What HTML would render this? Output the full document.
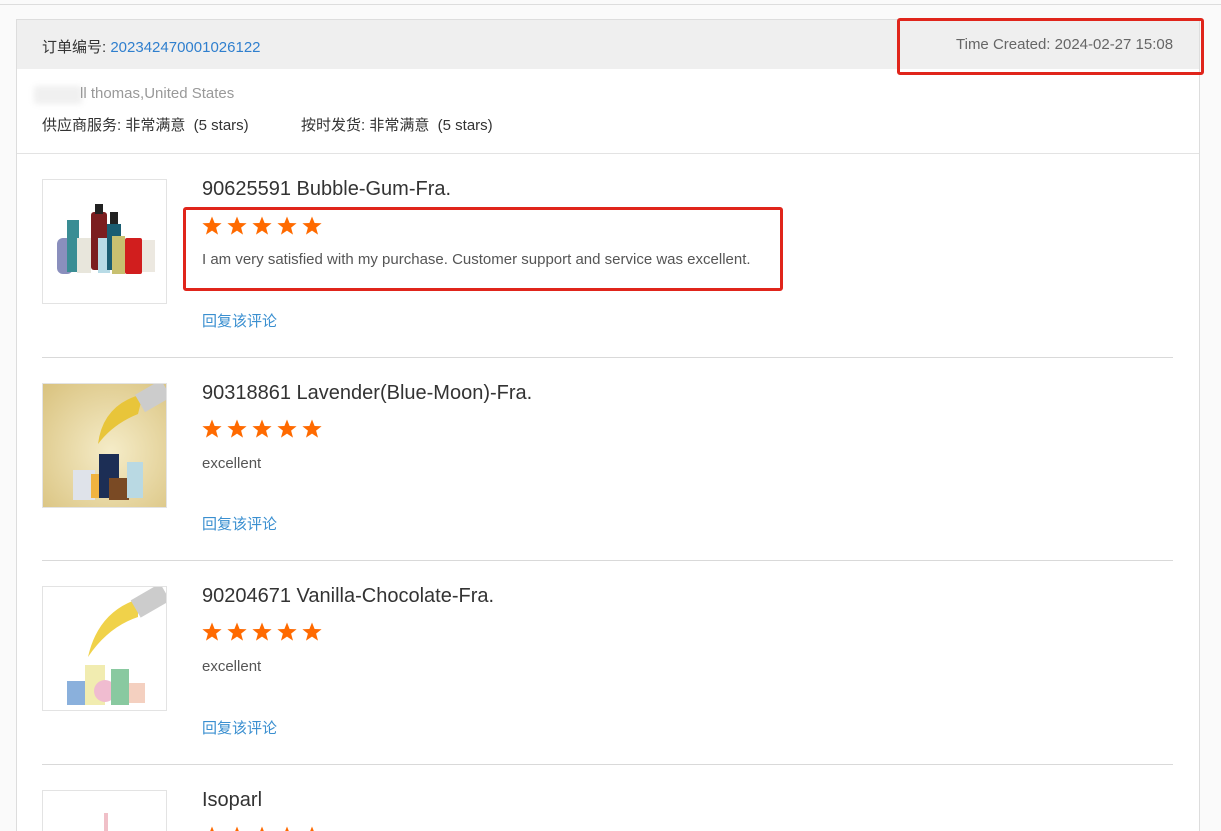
<!DOCTYPE html>
<html style="width:1221px;height:831px;overflow:hidden"><head><meta charset="utf-8"><style>
*{margin:0;padding:0;box-sizing:border-box}
body{width:1221px;height:831px;overflow:hidden;background:#fafafa;font-family:"Liberation Sans","Noto Sans CJK SC",sans-serif;position:relative;color:#333}
.a{position:absolute;white-space:nowrap}
.topline{position:absolute;left:0;top:4px;width:1221px;height:1px;background:#ddd}
.box{position:absolute;left:16px;top:19px;width:1184px;height:830px;background:#fff;border:1px solid #ddd}
.hdr{position:absolute;left:17px;top:20px;width:1182px;height:49px;background:#efefef}
.sep{position:absolute;left:42px;width:1131px;height:1px;background:#d9d9d9}
.img{position:absolute;left:42px;width:125px;height:125px;border:1px solid #e3e3e3;overflow:hidden;background:#fff}
.t{font-size:20px;color:#333}
.c{font-size:15px;color:#555}
.r{font-size:15px;color:#3a8fd0}
.red{position:absolute;border:3px solid #e0251b;border-radius:3px}
</style></head><body>
<div class="topline"></div>
<div class="box"></div>
<div class="hdr"></div>
<div class="sep" style="left:17px;width:1182px;top:153px;background:#e3e3e3"></div>
<div class="a" style="left:42px;top:36px;font-size:15px;color:#333">订单编号: <span style="color:#2f7fce">202342470001026122</span></div>
<div class="a" style="left:956px;top:36px;font-size:15px;color:#666">Time Created: 2024-02-27 15:08</div>
<div class="red" style="left:897px;top:18px;width:307px;height:57px"></div>
<div class="a" style="left:34px;top:86px;width:48px;height:18px;background:#f0f0f0;filter:blur(3px)"></div>
<div class="a" style="left:80px;top:85px;font-size:15px;color:#999">ll thomas,United States</div>
<div class="a" style="left:42px;top:114px;font-size:15px;color:#333">供应商服务: 非常满意 &nbsp;(5 stars)</div>
<div class="a" style="left:301px;top:114px;font-size:15px;color:#333">按时发货: 非常满意 &nbsp;(5 stars)</div>

<svg width="0" height="0" style="position:absolute"><defs><symbol id="s" viewBox="0 0 20 20"><polygon points="10,0.5 12.6,7 19.6,7.2 14.1,11.6 16,18.6 10,14.6 4,18.6 5.9,11.6 0.4,7.2 7.4,7" fill="#ff6a00"/></symbol>
<g id="stars"><use href="#s" x="0" width="20" height="20"/><use href="#s" x="25" width="20" height="20"/><use href="#s" x="50" width="20" height="20"/><use href="#s" x="75" width="20" height="20"/><use href="#s" x="100" width="20" height="20"/></g></defs></svg>

<div class="img" style="top:179px">
<svg width="125" height="125"><rect x="14" y="58" width="16" height="36" rx="6" fill="#8a8fbd"/><rect x="24" y="40" width="12" height="52" fill="#3a8d94"/><rect x="34" y="58" width="14" height="35" fill="#e8e6dc"/><rect x="48" y="32" width="16" height="58" rx="3" fill="#7b1d1f"/><rect x="52" y="24" width="8" height="10" fill="#222"/><rect x="55" y="58" width="12" height="35" fill="#b8dbe6"/><rect x="64" y="44" width="14" height="46" fill="#1a5d72"/><rect x="67" y="32" width="8" height="12" fill="#222"/><rect x="69" y="56" width="13" height="38" fill="#c8c070"/><rect x="82" y="58" width="17" height="36" rx="2" fill="#d11e1e"/><rect x="99" y="60" width="13" height="32" fill="#ece8e0"/></svg></div>
<div class="a t" style="left:202px;top:178px">90625591 Bubble-Gum-Fra.</div>
<svg class="a" style="left:202px;top:216px" width="125" height="20"><use href="#stars"/></svg>
<div class="a c" style="left:202px;top:251px">I am very satisfied with my purchase. Customer support and service was excellent.</div>
<div class="red" style="left:183px;top:207px;width:600px;height:84px"></div>
<div class="a r" style="left:202px;top:310px">回复该评论</div>
<div class="sep" style="top:357px"></div>

<div class="img" style="top:383px;background:radial-gradient(circle at 55% 55%,#f5ecc8,#d9c27e)">
<svg width="125" height="125"><path d="M100 10 Q60 20 55 60 Q70 40 95 30Z" fill="#e8c53a"/><rect x="95" y="2" width="30" height="20" fill="#ccc" transform="rotate(-30 110 12)"/><rect x="30" y="86" width="22" height="30" fill="#dfe3ea"/><rect x="48" y="90" width="18" height="24" fill="#f0b340"/><rect x="56" y="70" width="20" height="44" fill="#1c2e55"/><rect x="66" y="94" width="20" height="22" fill="#7a4a24"/><rect x="84" y="78" width="16" height="36" fill="#b9d9e3"/></svg></div>
<div class="a t" style="left:202px;top:382px">90318861 Lavender(Blue-Moon)-Fra.</div>
<svg class="a" style="left:202px;top:419px" width="125" height="20"><use href="#stars"/></svg>
<div class="a c" style="left:202px;top:455px">excellent</div>
<div class="a r" style="left:202px;top:513px">回复该评论</div>
<div class="sep" style="top:560px"></div>

<div class="img" style="top:586px">
<svg width="125" height="125"><path d="M95 12 Q55 25 45 70 Q65 40 95 30Z" fill="#f0d24a"/><rect x="90" y="2" width="34" height="20" fill="#ccc" transform="rotate(-30 110 12)"/><rect x="24" y="94" width="20" height="24" fill="#8ab0dc"/><rect x="42" y="78" width="20" height="40" fill="#f1ecb0"/><circle cx="62" cy="104" r="11" fill="#f0bcd0"/><rect x="68" y="82" width="18" height="36" fill="#89c9a0"/><rect x="86" y="96" width="16" height="20" fill="#f4d0c0"/></svg></div>
<div class="a t" style="left:202px;top:585px">90204671 Vanilla-Chocolate-Fra.</div>
<svg class="a" style="left:202px;top:622px" width="125" height="20"><use href="#stars"/></svg>
<div class="a c" style="left:202px;top:658px">excellent</div>
<div class="a r" style="left:202px;top:717px">回复该评论</div>
<div class="sep" style="top:764px"></div>

<div class="img" style="top:790px;height:41px;border-bottom:none"><div style="position:absolute;left:61px;top:22px;width:4px;height:19px;background:#f0c0c8"></div></div>
<div class="a t" style="left:202px;top:789px">Isoparl</div>
<svg class="a" style="left:202px;top:826px" width="125" height="5"><use href="#stars"/></svg>
</body></html>
